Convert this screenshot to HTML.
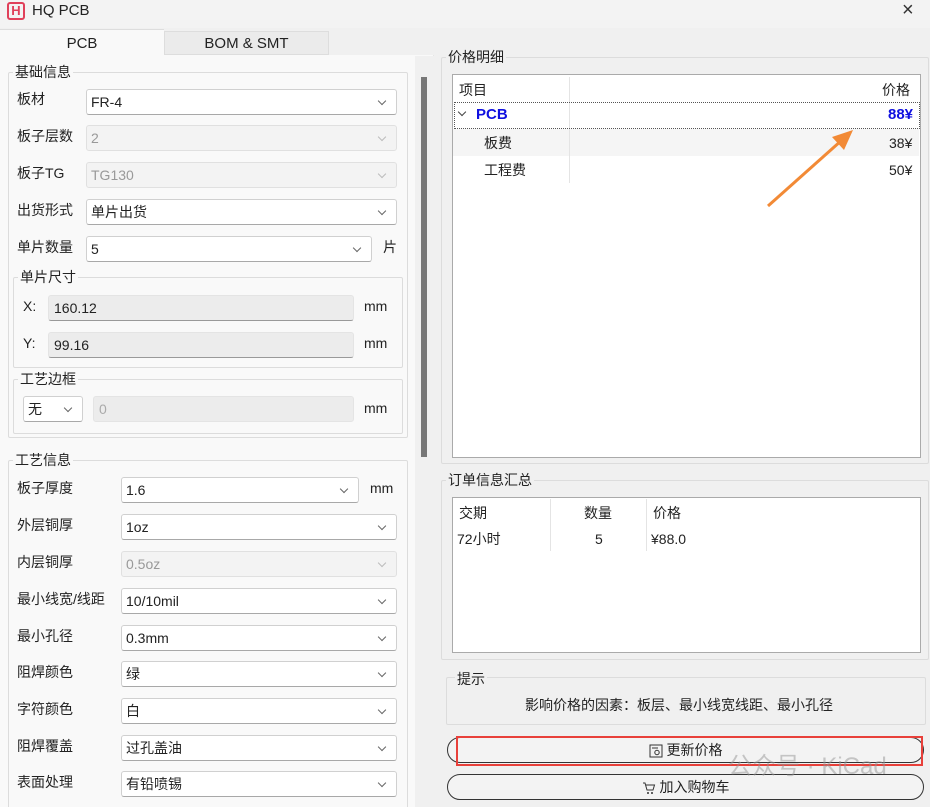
<!DOCTYPE html>
<html><head><meta charset="utf-8"><style>
*{box-sizing:border-box;margin:0;padding:0}
html,body{width:930px;height:807px;overflow:hidden}
body{background:#f0f0f0;font-family:"Liberation Sans","Noto Sans CJK SC",sans-serif;font-size:14px;color:#222;position:relative}
.a{position:absolute}
.grp{position:absolute;border:1px solid #dcdcdc;border-radius:2px}
.gt{position:absolute;background:#f0f0f0;padding:0 2px;font-size:14px;top:-10px;left:4px;line-height:18px}
.cb{position:absolute;height:26px;background:#fff;border:1px solid #d0d0d0;border-bottom-color:#a8a8a8;border-radius:3px;padding-left:4px;line-height:24px;font-size:14px}
.cb.d{background:#f3f3f3;color:#999;border-color:#e0e0e0}
.cb:after{content:"";position:absolute;right:11px;top:8px;width:5px;height:5px;border-right:1px solid #666;border-bottom:1px solid #666;transform:rotate(45deg)}
.cb.d:after{border-color:#bbb}
.ed{position:absolute;height:26px;background:#ececec;border:1px solid #e4e4e4;border-bottom:1px solid #999;border-radius:3px;padding-left:5px;line-height:25px;font-size:14px}
.lb{position:absolute;font-size:14px;line-height:18px}
.btn{position:absolute;left:447px;width:477px;height:26px;border:1px solid #333;border-radius:13px;background:#f3f3f3;text-align:center;line-height:24px;font-size:14px}
.btn svg{vertical-align:-3px;margin-right:4px}
</style></head><body>
<div class="a" style="left:0;top:0;width:930px;height:28px;background:#f3f3f3"></div>
<div class="a" style="left:7px;top:2px;width:18px;height:18px;border:2px solid #e0405a;border-radius:3px;color:#e0405a;font-weight:bold;font-size:13px;line-height:14px;text-align:center">H</div>
<div class="a" style="left:32px;top:2px;font-size:15px;line-height:18px">HQ PCB</div>
<div class="a" style="left:902px;top:-1px;font-size:20px;line-height:22px;color:#333">×</div>
<div class="a" style="left:0;top:29px;width:164px;height:28px;background:#f9f9f9;border-top:1px solid #ddd;text-align:center;line-height:27px;font-size:15px">PCB</div>
<div class="a" style="left:164px;top:31px;width:165px;height:24px;background:#ebebeb;border:1px solid #ddd;text-align:center;line-height:24px;font-size:15px">BOM &amp; SMT</div>
<div class="a" style="left:0;top:55px;width:434px;height:752px;background:#f9f9f9;border-right:1px solid #e6e6e6"></div>
<div class="a" style="left:415px;top:56px;width:19px;height:751px;background:#f0f0f0"></div>
<div class="a" style="left:421px;top:77px;width:6px;height:380px;background:#777"></div>
<div class="grp" style="left:8px;top:72px;width:400px;height:366px"><div class="gt" style="background:#f9f9f9">基础信息</div></div>
<div class="lb" style="left:17px;top:90px">板材</div><div class="cb" style="left:86px;top:89px;width:311px">FR-4</div>
<div class="lb" style="left:17px;top:127px">板子层数</div><div class="cb d" style="left:86px;top:125px;width:311px">2</div>
<div class="lb" style="left:17px;top:164px">板子TG</div><div class="cb d" style="left:86px;top:162px;width:311px">TG130</div>
<div class="lb" style="left:17px;top:201px">出货形式</div><div class="cb" style="left:86px;top:199px;width:311px">单片出货</div>
<div class="lb" style="left:17px;top:238px">单片数量</div><div class="cb" style="left:86px;top:236px;width:286px">5</div><div class="lb" style="left:383px;top:238px">片</div>
<div class="grp" style="left:13px;top:277px;width:390px;height:91px"><div class="gt" style="background:#f9f9f9">单片尺寸</div></div>
<div class="lb" style="left:23px;top:297px">X:</div><div class="ed" style="left:48px;top:295px;width:306px">160.12</div><div class="lb" style="left:364px;top:297px">mm</div>
<div class="lb" style="left:23px;top:334px">Y:</div><div class="ed" style="left:48px;top:332px;width:306px">99.16</div><div class="lb" style="left:364px;top:334px">mm</div>
<div class="grp" style="left:13px;top:379px;width:390px;height:55px"><div class="gt" style="background:#f9f9f9">工艺边框</div></div>
<div class="cb" style="left:23px;top:396px;width:60px">无</div>
<div class="ed" style="left:93px;top:396px;width:261px;color:#aaa;border-bottom-color:#e4e4e4">0</div><div class="lb" style="left:364px;top:399px">mm</div>
<div class="grp" style="left:8px;top:460px;width:400px;height:360px"><div class="gt" style="background:#f9f9f9">工艺信息</div></div>
<div class="lb" style="left:17px;top:479px">板子厚度</div><div class="cb" style="left:121px;top:477px;width:238px">1.6</div><div class="lb" style="left:370px;top:479px">mm</div>
<div class="lb" style="left:17px;top:516px">外层铜厚</div><div class="cb" style="left:121px;top:514px;width:276px">1oz</div>
<div class="lb" style="left:17px;top:553px">内层铜厚</div><div class="cb d" style="left:121px;top:551px;width:276px">0.5oz</div>
<div class="lb" style="left:17px;top:590px">最小线宽/线距</div><div class="cb" style="left:121px;top:588px;width:276px">10/10mil</div>
<div class="lb" style="left:17px;top:627px">最小孔径</div><div class="cb" style="left:121px;top:625px;width:276px">0.3mm</div>
<div class="lb" style="left:17px;top:663px">阻焊颜色</div><div class="cb" style="left:121px;top:661px;width:276px">绿</div>
<div class="lb" style="left:17px;top:700px">字符颜色</div><div class="cb" style="left:121px;top:698px;width:276px">白</div>
<div class="lb" style="left:17px;top:737px">阻焊覆盖</div><div class="cb" style="left:121px;top:735px;width:276px">过孔盖油</div>
<div class="lb" style="left:17px;top:773px">表面处理</div><div class="cb" style="left:121px;top:771px;width:276px">有铅喷锡</div>
<div class="grp" style="left:441px;top:57px;width:488px;height:407px"><div class="gt">价格明细</div></div>
<div class="a" style="left:452px;top:74px;width:469px;height:384px;background:#fff;border:1px solid #aaa"></div>
<div class="a" style="left:569px;top:77px;width:1px;height:106px;background:#e4e4e4"></div>
<div class="lb" style="left:459px;top:81px">项目</div><div class="lb" style="left:882px;top:81px">价格</div>
<div class="a" style="left:454px;top:102px;width:466px;height:27px;border:1px dotted #555"></div>
<div class="a" style="left:459px;top:109px;width:6px;height:6px;border-right:1.5px solid #444;border-bottom:1.5px solid #444;transform:rotate(45deg)"></div>
<div class="lb" style="left:476px;top:106px;color:#1010e0;font-weight:bold;font-size:15px">PCB</div>
<div class="lb" style="left:888px;top:106px;color:#1010e0;font-weight:bold;font-size:15px">88¥</div>
<div class="a" style="left:453px;top:129px;width:466px;height:27px;background:#f5f5f5"></div>
<div class="a" style="left:569px;top:129px;width:1px;height:54px;background:#e4e4e4"></div>
<div class="lb" style="left:484px;top:134px">板费</div><div class="lb" style="left:889px;top:134px">38¥</div>
<div class="lb" style="left:484px;top:161px">工程费</div><div class="lb" style="left:889px;top:161px">50¥</div>
<svg class="a" style="left:760px;top:125px" width="100" height="85"><line x1="8" y1="81" x2="82" y2="15" stroke="#f28a36" stroke-width="3"/><polygon points="93,5 72,12 84,25" fill="#f28a36"/></svg>
<div class="grp" style="left:441px;top:480px;width:488px;height:180px"><div class="gt">订单信息汇总</div></div>
<div class="a" style="left:452px;top:497px;width:469px;height:156px;background:#fff;border:1px solid #aaa"></div>
<div class="a" style="left:550px;top:499px;width:1px;height:52px;background:#e4e4e4"></div>
<div class="a" style="left:646px;top:499px;width:1px;height:52px;background:#e4e4e4"></div>
<div class="lb" style="left:459px;top:504px">交期</div><div class="lb" style="left:584px;top:504px">数量</div><div class="lb" style="left:653px;top:504px">价格</div>
<div class="lb" style="left:457px;top:530px">72小时</div><div class="lb" style="left:595px;top:530px">5</div><div class="lb" style="left:651px;top:530px">¥88.0</div>
<div class="grp" style="left:446px;top:677px;width:480px;height:48px"><div class="gt" style="left:8px;top:-8px;background:#f0f0f0">提示</div></div>
<div class="lb" style="left:525px;top:696px">影响价格的因素：板层、最小线宽线距、最小孔径</div>
<div class="btn" style="top:737px"><svg width="14" height="14" viewBox="0 0 14 14"><rect x="1" y="1" width="12" height="12" fill="none" stroke="#333"/><line x1="3" y1="4" x2="9" y2="4" stroke="#333"/><circle cx="8" cy="8.5" r="2.2" fill="none" stroke="#333"/></svg>更新价格</div>
<div class="a" style="left:456px;top:736px;width:467px;height:30px;border:2px solid #e8403a"></div>
<div class="btn" style="top:774px"><svg width="14" height="14" viewBox="0 0 14 14"><path d="M1 2h2l2 7h6l1.5-5H4" fill="none" stroke="#333"/><circle cx="6" cy="12" r="1" fill="#333"/><circle cx="10" cy="12" r="1" fill="#333"/></svg>加入购物车</div>
<div class="a" style="left:728px;top:752px;font-size:24px;color:rgba(150,150,150,0.5);line-height:30px">公众号 · KiCad</div>
</body></html>
